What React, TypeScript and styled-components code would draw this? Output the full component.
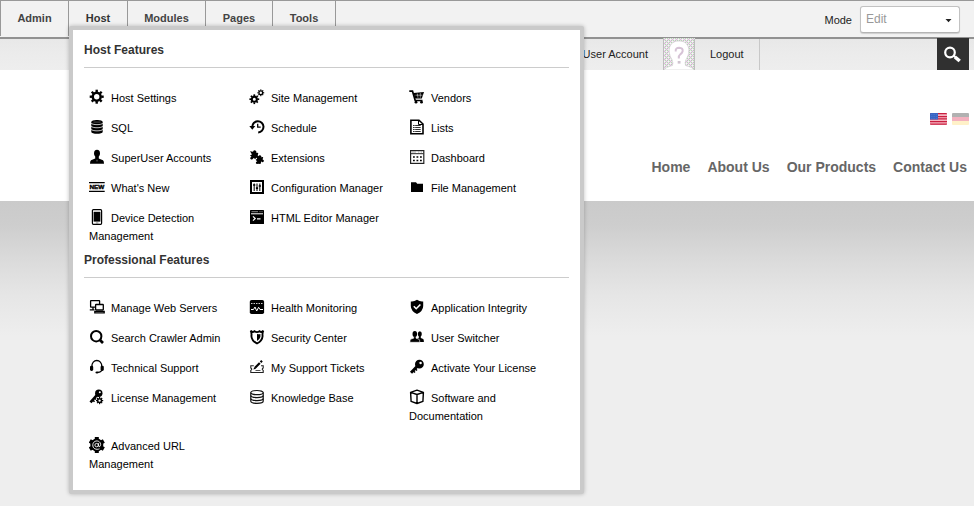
import React from 'react';
import styled, { createGlobalStyle } from 'styled-components';

const GlobalStyle = createGlobalStyle`
  * { box-sizing: border-box; }
  body { margin: 0; background: #eee; font-family: "Liberation Sans", Arial, sans-serif; font-size: 11px; color: #000; overflow: hidden; }
`;

const Page = styled.div`
  position: relative;
  width: 974px;
  height: 506px;
  overflow: hidden;
  display: flex;
  flex-direction: column;
  background: #eee;
`;

const ControlBar = styled.header`
  display: flex;
  justify-content: space-between;
  flex: none;
  height: 39px;
  background: #f2f2f2;
  border-top: 1px solid #999;
  border-bottom: 2px solid #929292;
  position: relative;
`;

const Tabs = styled.nav`
  display: flex;
  height: 35px;
  border-left: 1px solid #999;
`;

const Tab = styled.a<{ $width: number; $active?: boolean }>`
  width: ${(p) => p.$width}px;
  height: 35px;
  line-height: 34px;
  border-right: 1px solid #999;
  text-align: center;
  font-weight: bold;
  color: ${(p) => (p.$active ? '#333' : '#444')};
`;

const ModeArea = styled.div`
  display: flex;
  align-items: flex-start;
  gap: 8px;
  padding: 5px 14px 0 0;
  color: #222;
`;

const ModeLabel = styled.span`
  line-height: 28px;
`;

const ModeSelect = styled.div`
  display: flex;
  justify-content: space-between;
  width: 100px;
  height: 27px;
  padding: 0 7px 0 5px;
  line-height: 25px;
  font-size: 12px;
  color: #999;
  background: #fff;
  border: 1px solid #c2c2c2;
  border-bottom-color: #b4b4b4;
  border-radius: 3px;
  box-shadow: 0 1px 1px rgba(0, 0, 0, 0.15);
`;

const Caret = styled.svg`
  width: 7px;
  height: 4px;
  margin-top: 12px;
`;

const UserBar = styled.div`
  display: flex;
  flex: none;
  justify-content: flex-end;
  height: 31px;
  padding-right: 5px;
  line-height: 31px;
  color: #222;
  background: linear-gradient(#e8e8e8, #ebebeb 40%, #eee);
`;

const Account = styled.a`
  margin-right: 15px;
`;

const Avatar = styled.svg`
  width: 32px;
  height: 32px;
  margin-top: -1px;
  z-index: 1;
`;

const Logout = styled.a`
  width: 65px;
  padding-left: 15px;
  border-right: 1px solid #c8c8c8;
`;

const SearchButton = styled.button`
  width: 32px;
  height: 32px;
  margin: -1px 0 0 177px;
  padding: 0;
  border: 0;
  background: #303030;
  z-index: 1;
`;

const SiteHeader = styled.section`
  display: flex;
  flex: none;
  flex-direction: column;
  align-items: flex-end;
  height: 131px;
  background: #fff;
`;

const Languages = styled.div`
  display: flex;
  gap: 5px;
  height: 12px;
  margin: 43px 5px 0 0;
`;

const Flag = styled.svg<{ $faded?: boolean }>`
  width: 17px;
  height: 12px;
  border-radius: 1px;
  opacity: ${(p) => (p.$faded ? 0.3 : 1)};
`;

const SiteNav = styled.nav`
  display: flex;
  gap: 17px;
  margin: 34px 7px 0 0;
  font-size: 14px;
  font-weight: bold;
  line-height: 16px;
  color: #666;
`;

const Backdrop = styled.main`
  flex: 1;
  background: linear-gradient(#cacaca, #cecece 25px, #dbdbdb 60px, #e6e6e6 95px, #eee 135px);
`;

const MegaMenu = styled.div`
  position: absolute;
  left: 69px;
  top: 26px;
  width: 515px;
  height: 468px;
  padding: 10px 11px 0 11px;
  background: #fff;
  border: 4px solid #cacaca;
  border-radius: 2px;
  box-shadow: 0 0 4px rgba(0, 0, 0, 0.25);
  z-index: 2;
`;

const SectionTitle = styled.h2<{ $follows?: boolean }>`
  height: 28px;
  margin: ${(p) => (p.$follows ? '5px' : 0)} 0 21px;
  border-bottom: 1px solid #ccc;
  font-size: 12px;
  line-height: 20px;
  color: #333;
`;

const ItemGrid = styled.div`
  display: grid;
  grid-template-columns: repeat(3, 160px);
  row-gap: 12px;
  padding-left: 5px;
`;

const Item = styled.a`
  width: 144px;
  line-height: 18px;
`;

const ItemIcon = styled.svg`
  width: 16px;
  height: 16px;
  margin-right: 6px;
  vertical-align: -3px;
`;

const Gear = ({ x, y, r, hole, teeth = 8 }: { x: number; y: number; r: number; hole: number; teeth?: number }) => (
  <g transform={`translate(${x} ${y})`}>
    <circle r={(r * 0.74 + hole) / 2} fill="none" stroke="#000" strokeWidth={r * 0.74 - hole} />
    {Array.from({ length: teeth }, (_, i) => (
      <rect key={i} x={-r * 0.17} y={-r} width={r * 0.34} height={r * 0.35} transform={`rotate(${(i * 360) / teeth})`} />
    ))}
  </g>
);

const icons: Record<string, React.ReactNode> = {
  settings: <Gear x={7.7} y={7.7} r={7} hole={2.7} />,
  sites: (
    <>
      <Gear x={5.3} y={10.2} r={4.9} hole={1.5} />
      <Gear x={11.8} y={3.8} r={3.4} hole={1.2} />
    </>
  ),
  vendors: (
    <>
      <path d="M0.3 2.2H3.5L6.2 11.5H13.5" fill="none" stroke="#000" strokeWidth="1.7" />
      <path d="M4.5 4L15 3L12.8 9.5H6.2Z" />
      <path d="M6.5 6.2H13.5M8.3 4.5L9 8.8M11.3 4V8.8" stroke="#fff" strokeWidth=".5" />
      <circle cx="7" cy="13.2" r="1.4" />
      <circle cx="12.5" cy="13.2" r="1.4" />
    </>
  ),
  sql: (
    <>
      <path d="M2.3 3.2V12.8C2.3 15.5 13.7 15.5 13.7 12.8V3.2C13.7.4 2.3.4 2.3 3.2Z" />
      <path d="M2 4C3.2 6.2 12.8 6.2 14 4M2 7.1C3.2 9.3 12.8 9.3 14 7.1M2 10.2C3.2 12.4 12.8 12.4 14 10.2" fill="none" stroke="#fff" strokeWidth=".75" />
      <path d="M4.5 3.1H11.5" stroke="#777" strokeWidth=".6" />
    </>
  ),
  schedule: (
    <>
      <path d="M3.3 8A5.6 5.6 0 1 1 9.2 13.4" fill="none" stroke="#000" strokeWidth="2" />
      <path d="M0.3 7H6.3L3.3 10.8Z" />
      <path d="M8.7 4.7V8.2H11.7" fill="none" stroke="#000" strokeWidth="1.3" />
    </>
  ),
  lists: (
    <>
      <path d="M1.9 1.2H10L14 5V14.7H1.9Z" fill="none" stroke="#000" strokeWidth="1.6" />
      <path d="M9.5 1V5.5H14" fill="none" stroke="#000" />
      <path d="M4 6.5H11.7M4 8.5H11.7M4 10.5H11.7M4 12.5H11.7" stroke="#333" />
      <path d="M5.8 5.5V13" stroke="#fff" strokeWidth=".5" />
    </>
  ),
  superuser: (
    <>
      <ellipse cx="8" cy="4.3" rx="3" ry="3.5" />
      <path d="M6.2 7H9.8V9.4L14 11.2Q15 11.7 15 14.8H1Q1 11.7 2 11.2L6.2 9.4Z" />
      <path d="M7.4 10.8H8.6L8.2 12.8H7.8Z" fill="#777" />
    </>
  ),
  extensions: (
    <>
      <path d="M1 2.2L4 2.7Q4.5.5 6.3 1.5T6.8 3.5L9.3 4L8.7 6.4Q11 7.8 9.5 9Q8.3 9.7 7.5 8.5L6.3 10L4.5 9Q3.2 11.5 1.5 10Q.7 8.5 2.5 7.8L1 6.2L3 5.6Z" />
      <path d="M7 7.2L9.5 7.5Q10 5.5 11.7 6.5T11.7 8.2L14.2 8L13.6 10.5Q15.8 11.3 14.3 13Q13 13.5 12.4 12.3L11.5 15L8.8 14.7Q7.5 15.3 6.8 13.9Q6.9 12.6 8.3 12.6L6.6 10.8L8.2 9.7Z" />
    </>
  ),
  dashboard: (
    <>
      <rect x="1.6" y="1.6" width="13.2" height="12.8" fill="none" stroke="#222" strokeWidth="1.2" />
      <path d="M2 4.7H14.5" stroke="#222" />
      <path d="M3 3H7M9 3H10.4M11.7 3H13" stroke="#888" strokeWidth=".8" />
      <path d="M4 8H13M4 11.5H13" stroke="#000" strokeWidth="1.7" strokeDasharray="1.8 1.7" />
    </>
  ),
  news: (
    <>
      <path d="M0 3.6H15.7M0 12.4H15.7" stroke="#000" strokeWidth="1.1" />
      <text x="7.9" y="10.1" textAnchor="middle" fontSize="5.8" fontWeight="bold" stroke="#000" strokeWidth=".35" textLength="15" lengthAdjust="spacingAndGlyphs">NEW</text>
    </>
  ),
  config: (
    <>
      <rect x="2" y="2" width="12" height="12" fill="none" stroke="#000" strokeWidth="2" />
      <path d="M5.2 4.5V12M8 4.5V12M10.8 4.5V12" stroke="#222" strokeWidth="1.2" />
      <path d="M4.1 6H6.3M6.9 9.2H9.1M9.7 7H11.9" stroke="#000" strokeWidth="1.7" />
    </>
  ),
  files: <path d="M2 3.2H7L8.2 4.8H14V13H2Z" />,
  device: (
    <>
      <rect x="3.4" y=".7" width="9.2" height="14.6" rx="1" fill="none" stroke="#000" strokeWidth="1.2" />
      <rect x="4.6" y="2.8" width="6.8" height="9.8" />
      <path d="M6.8 14H9.4" stroke="#555" strokeWidth=".8" />
    </>
  ),
  editor: (
    <>
      <rect x="1" y="1" width="14" height="14" rx=".6" />
      <path d="M2 4.8H14" stroke="#fff" />
      <path d="M2.5 2.7H9M10.5 2.7H11.5M12.5 2.7H13.5" stroke="#aaa" strokeWidth=".8" />
      <path d="M4 7.3L6.2 9.5L4 11.7M8 9.8H11.5" fill="none" stroke="#fff" strokeWidth="1.2" />
    </>
  ),
  servers: (
    <g fill="#fff" stroke="#000" strokeWidth="1.3">
      <rect x="1.6" y="1.6" width="9" height="6.5" rx=".5" />
      <path d="M4 8V10.5M.8 10.8H5.5" fill="none" />
      <rect x="6.6" y="5.5" width="7.7" height="5.5" rx=".5" />
      <path d="M5.8 13.9V12.3H15.2V13.9Z" />
    </g>
  ),
  health: (
    <>
      <rect x=".8" y="1" width="14.3" height="14" rx="1.8" />
      <path d="M2 4.5H14" stroke="#fff" strokeWidth=".8" strokeDasharray="1.5 1" />
      <path d="M2 10.5H4.5L6 8L7.7 12L9.6 8.3L11 10.5H14" fill="none" stroke="#fff" />
    </>
  ),
  integrity: (
    <>
      <path d="M8 .8Q11 3 14.2 2.5V7Q14.2 12 8 15Q1.8 12 1.8 7V2.5Q5 3 8 .8Z" />
      <path d="M4.8 7.3L7.2 9.7L11.4 5.5" fill="none" stroke="#fff" strokeWidth="1.6" />
    </>
  ),
  crawler: (
    <>
      <circle cx="7.2" cy="7.2" r="5.2" fill="none" stroke="#000" strokeWidth="2" />
      <path d="M10.7 10.7L14 14" stroke="#000" strokeWidth="2.7" />
    </>
  ),
  security: (
    <>
      <path d="M1.7 1.6Q4 4 5.5 2.2Q8 4 10.5 2.2Q12 4 14.3 1.6Q13.1 4.5 13.6 7Q13.3 11.9 8 14.5Q2.7 11.9 2.4 7Q2.9 4.5 1.7 1.6Z" fill="none" stroke="#000" strokeWidth="1.9" />
      <path d="M8 4.8Q9.6 5.8 11.4 5V8Q10.7 10.5 8 12Z" />
    </>
  ),
  users: (
    <>
      <ellipse cx="10.8" cy="4.9" rx="2" ry="2.6" />
      <path d="M9.8 6H11.8V9L14.2 10Q14.9 10.6 14.9 13H8V9.7L9.8 9Z" />
      <g stroke="#fff" strokeWidth=".6">
        <path d="M4.7 7H7V9.2L9.8 10.1Q10.8 10.7 10.8 13.3H.9Q.9 10.7 1.9 10.1L4.7 9.2Z" />
      </g>
      <ellipse cx="5.8" cy="4.9" rx="2.3" ry="2.9" />
    </>
  ),
  support: (
    <>
      <path d="M2.9 7.8C2.3-.6 13.3-.6 12.8 7.8M12.9 10Q12.9 13.5 8.5 13.4" fill="none" stroke="#000" strokeWidth="1.3" />
      <rect x="1" y="6.7" width="3.2" height="5.3" rx="1.4" />
      <rect x="11.6" y="6.7" width="3.2" height="5.3" rx="1.4" />
      <ellipse cx="8" cy="13.4" rx="1.6" ry="1" />
    </>
  ),
  tickets: (
    <>
      <path d="M4.8 6.8H1.8V9Q3.7 10.2 1.8 11.4V13.5H14.2V11.4Q12.3 10.2 14.2 9V6.8H12" fill="none" stroke="#222" strokeWidth="1.1" />
      <path d="M4.4 10.6L5.3 8L7.1 9.8Z" />
      <path d="M6.1 8.8L10.8 4M11.6 3.2L13 1.8" stroke="#000" strokeWidth="2.2" />
      <path d="M6.5 11.5H11.5" stroke="#555" />
    </>
  ),
  activate: (
    <>
      <circle cx="10.4" cy="5.2" r="3" fill="none" stroke="#000" strokeWidth="2.8" />
      <circle cx="10" cy="5.6" r="2.4" />
      <path d="M8.5 7L2 13.8" stroke="#000" strokeWidth="2.9" />
      <path d="M4 11.5L6 13.5M6 9.6L8 11.5" stroke="#000" strokeWidth="1.6" />
      <circle cx="11.6" cy="4" r="1.2" fill="#fff" />
    </>
  ),
  license: (
    <>
      <circle cx="9.8" cy="4.2" r="3.7" />
      <path d="M8.1 5.8L1.5 13.3" stroke="#000" strokeWidth="2.6" />
      <path d="M3.6 10.9L5.5 12.8M5.4 9L7 10.5" stroke="#000" strokeWidth="1.5" />
      <circle cx="10.8" cy="3.2" r="1" fill="#fff" />
      <Gear x={10.6} y={11.6} r={3.6} hole={1.2} />
    </>
  ),
  knowledge: (
    <g fill="#fff" stroke="#111" strokeWidth="1.2">
      <path d="M1.8 3.5V12.3C1.8 15 14.2 15 14.2 12.3V3.5" />
      <ellipse cx="8" cy="3.6" rx="6.2" ry="2.1" />
      <path d="M1.8 6.5C1.8 9.2 14.2 9.2 14.2 6.5M1.8 9.5C1.8 12.2 14.2 12.2 14.2 9.5" fill="none" />
    </g>
  ),
  software: (
    <path d="M1.6 3.4L8 1.2L14.4 3.4L13.9 12.4L8 14.5L2.1 12.4ZM1.6 3.4L8 5.5L14.4 3.4M8 5.5V14.4" fill="none" stroke="#000" strokeWidth="1.4" strokeLinejoin="round" />
  ),
  url: (
    <>
      <g transform="translate(7.8 8)">
        {[0, 60, 120, 180, 240, 300].map((angle) => (
          <rect key={angle} x="-2" y="-8.1" width="4" height="4" transform={`rotate(${angle})`} />
        ))}
      </g>
      <circle cx="7.8" cy="8" r="6.5" />
      <g fill="none" stroke="#fff" strokeWidth=".9">
        <circle cx="7.6" cy="8.1" r="1.7" />
        <path d="M9.5 6.2V9Q9.7 10.2 10.8 9.5Q12.3 7.8 11.2 5.8C9.2 2.7 4.3 3.6 3.8 7.6C3.4 11.7 7.4 13.2 10.5 11.8" />
      </g>
    </>
  ),
};

type Entry = [icon: string, label: string];

const hostItems: Entry[] = [
  ['settings', 'Host Settings'], ['sites', 'Site Management'], ['vendors', 'Vendors'],
  ['sql', 'SQL'], ['schedule', 'Schedule'], ['lists', 'Lists'],
  ['superuser', 'SuperUser Accounts'], ['extensions', 'Extensions'], ['dashboard', 'Dashboard'],
  ['news', "What's New"], ['config', 'Configuration Manager'], ['files', 'File Management'],
  ['device', 'Device Detection Management'], ['editor', 'HTML Editor Manager'],
];

const professionalItems: Entry[] = [
  ['servers', 'Manage Web Servers'], ['health', 'Health Monitoring'], ['integrity', 'Application Integrity'],
  ['crawler', 'Search Crawler Admin'], ['security', 'Security Center'], ['users', 'User Switcher'],
  ['support', 'Technical Support'], ['tickets', 'My Support Tickets'], ['activate', 'Activate Your License'],
  ['license', 'License Management'], ['knowledge', 'Knowledge Base'], ['software', 'Software and Documentation'],
  ['url', 'Advanced URL Management'],
];

const MenuItems = ({ items }: { items: Entry[] }) => (
  <ItemGrid>
    {items.map(([icon, label]) => (
      <Item key={label}>
        <ItemIcon viewBox="0 0 16 16">{icons[icon]}</ItemIcon>
        {label}
      </Item>
    ))}
  </ItemGrid>
);

export default function App() {
  return (
    <Page>
      <GlobalStyle />
      <ControlBar>
        <Tabs>
          <Tab $width={68}>Admin</Tab>
          <Tab $width={59} $active>Host</Tab>
          <Tab $width={78}>Modules</Tab>
          <Tab $width={67}>Pages</Tab>
          <Tab $width={63}>Tools</Tab>
        </Tabs>
        <ModeArea>
          <ModeLabel>Mode</ModeLabel>
          <ModeSelect>
            Edit
            <Caret viewBox="0 0 7 4"><path d="M.5 0H6.5L3.5 3.3Z" fill="#222" /></Caret>
          </ModeSelect>
        </ModeArea>
      </ControlBar>
      <UserBar>
        <Account>User Account</Account>
        <Avatar viewBox="0 0 32 32">
          <defs>
            <pattern id="speckle" width="4" height="4" patternUnits="userSpaceOnUse">
              <rect width="4" height="4" fill="#e6e6e6" />
              <path d="M0 0h1v1h-1zM2 2h1v1h-1z" fill="#b5d6b2" />
              <path d="M1 1h1v1h-1zM3 3h1v1h-1z" fill="#e6b6e4" />
              <path d="M2 0h1v1h-1zM0 2h1v1h-1z" fill="#c0c0c0" />
              <path d="M3 1h1v1h-1zM1 3h1v1h-1z" fill="#f8f8f8" />
            </pattern>
          </defs>
          <rect width="32" height="32" fill="url(#speckle)" />
          <path d="M.5 1V32M31.5 1V32" stroke="#bdbdbd" />
          <path d="M1 32Q2 29.5 9.5 27.5Q10.5 25 9 21.5C4.5 15 4.5 3 16 3C27.5 3 27.5 15 23 21.5Q21.5 25 22.5 27.5Q30 29.5 31 32Z" fill="#fff" stroke="#c9c9c9" strokeWidth=".6" />
          <path d="M12.7 13.5Q12.3 9.7 16.2 9.7Q20.3 10 19.6 13.4Q19 15.2 17.3 16.3Q15.6 17.5 15.8 20.5" fill="none" stroke="#d6c3d6" strokeWidth="2" />
          <rect x="14.7" y="23" width="2.8" height="2.6" fill="#cfc4cf" />
        </Avatar>
        <Logout>Logout</Logout>
        <SearchButton aria-label="Search">
          <svg width="32" height="32" viewBox="0 0 32 32" fill="none" stroke="#fff">
            <circle cx="13" cy="14.5" r="4.8" strokeWidth="2.2" />
            <path d="M16.5 17.5L18.5 19.2" strokeWidth="2" />
            <path d="M18 19L22.7 23" strokeWidth="3.6" />
          </svg>
        </SearchButton>
      </UserBar>
      <SiteHeader>
        <Languages>
          <Flag viewBox="0 0 17 12">
            <rect width="17" height="12" fill="#f4b6c1" />
            <path d="M0 .7H17M0 3.5H17M0 5.9H17M0 8.5H17M0 11.2H17" stroke="#c91f40" strokeWidth="1.25" />
            <rect width="8" height="6.5" fill="#3865c4" />
            <path d="M1 1.5H8M1 3.5H8M1 5.5H8" stroke="#6f91d6" strokeWidth=".5" strokeDasharray=".7 1" />
          </Flag>
          <Flag viewBox="0 0 17 12" $faded>
            <rect width="17" height="4" />
            <rect y="4" width="17" height="4" fill="#d8002f" />
            <rect y="8" width="17" height="4" fill="#ffd34d" />
          </Flag>
        </Languages>
        <SiteNav>
          <a>Home</a>
          <a>About Us</a>
          <a>Our Products</a>
          <a>Contact Us</a>
        </SiteNav>
      </SiteHeader>
      <Backdrop />
      <MegaMenu>
        <SectionTitle>Host Features</SectionTitle>
        <MenuItems items={hostItems} />
        <SectionTitle $follows>Professional Features</SectionTitle>
        <MenuItems items={professionalItems} />
      </MegaMenu>
    </Page>
  );
}
